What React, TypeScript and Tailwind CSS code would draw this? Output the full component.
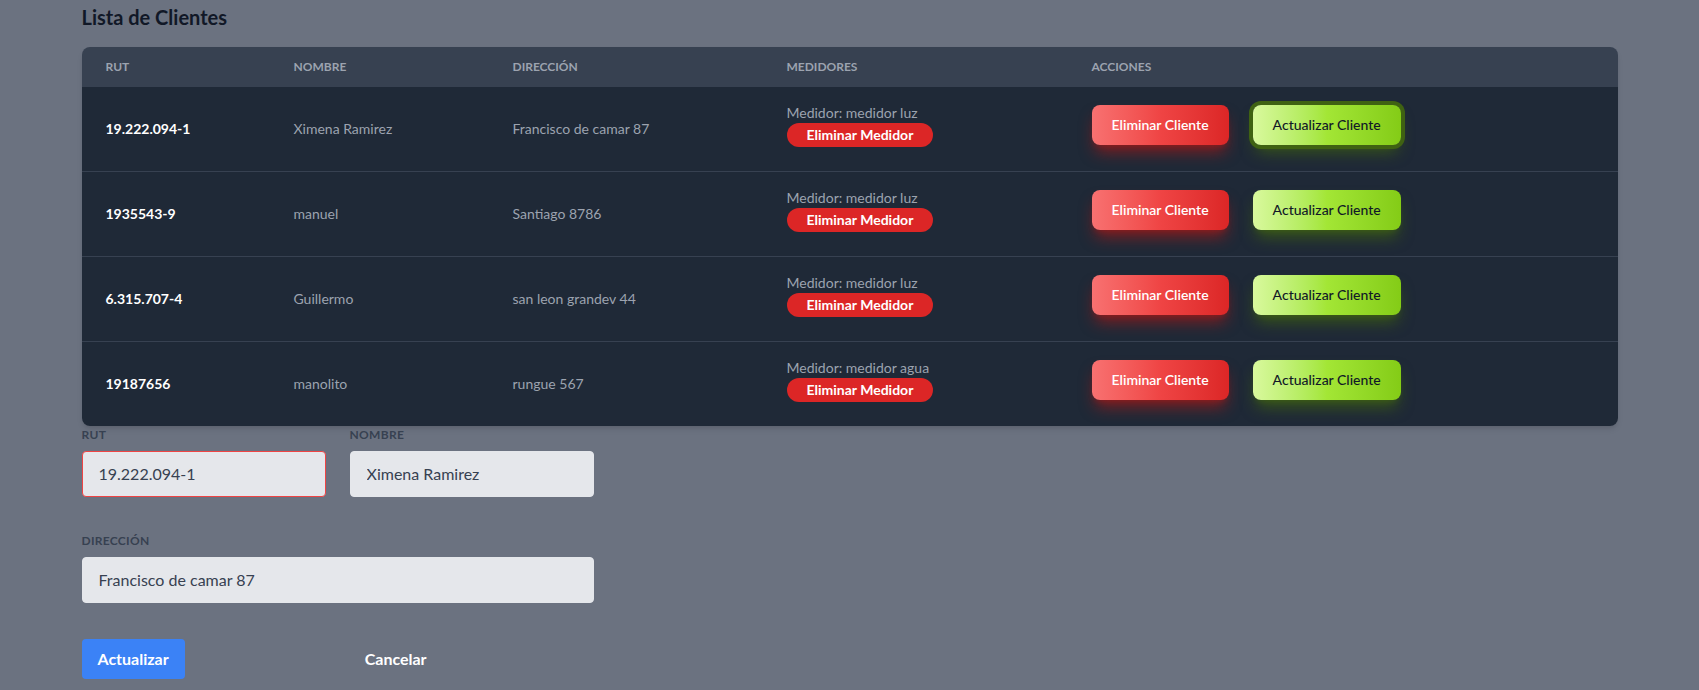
import React from 'react';

interface Cliente {
  rut: string;
  nombre: string;
  direccion: string;
  medidor: string;
}

const clientes: Cliente[] = [
  { rut: '19.222.094-1', nombre: 'Ximena Ramirez', direccion: 'Francisco de camar 87', medidor: 'medidor luz' },
  { rut: '1935543-9', nombre: 'manuel', direccion: 'Santiago 8786', medidor: 'medidor luz' },
  { rut: '6.315.707-4', nombre: 'Guillermo', direccion: 'san leon grandev 44', medidor: 'medidor luz' },
  { rut: '19187656', nombre: 'manolito', direccion: 'rungue 567', medidor: 'medidor agua' },
];

export default function App() {
  const editando = clientes[0];

  return (
    <div className="min-h-screen bg-[#6b7280] font-['Lato',_sans-serif]">
      <div className="container mx-auto pt-[3px]">
        <h2 className="text-xl font-bold text-[#111827] mb-4">Lista de Clientes</h2>

        {/* Tabla de clientes */}
        <div className="rounded-lg overflow-hidden shadow-md">
          <table className="w-full text-sm text-left text-[#9ca3af] table-fixed">
            <thead className="text-xs uppercase bg-[#374151] text-[#9ca3af]">
              <tr>
                <th className="px-6 py-3 w-[188px] font-bold">Rut</th>
                <th className="px-6 py-3 w-[219px] font-bold">Nombre</th>
                <th className="px-6 py-3 w-[274px] font-bold">Dirección</th>
                <th className="px-6 py-3 w-[305px] font-bold">Medidores</th>
                <th className="px-6 py-3 font-bold">Acciones</th>
              </tr>
            </thead>
            <tbody>
              {clientes.map((c, i) => (
                <tr
                  key={c.rut}
                  className={`bg-[#1f2937] ${i < clientes.length - 1 ? 'border-b border-[#374151]' : ''}`}
                >
                  <td className="px-6 py-4 align-middle font-bold text-white whitespace-nowrap">{c.rut}</td>
                  <td className="px-6 py-4 align-middle">{c.nombre}</td>
                  <td className="px-6 py-4 align-middle">{c.direccion}</td>
                  <td className="px-6 py-4 align-middle">
                    <div className="mb-2">
                      <p>Medidor: {c.medidor}</p>
                      <button className="rounded-full bg-[#dc2626] text-white font-bold text-sm px-5 py-0.5">
                        Eliminar Medidor
                      </button>
                    </div>
                  </td>
                  <td className="px-6 py-4 align-middle">
                    <div className="flex items-center gap-6">
                      <button className="mb-2 rounded-lg bg-linear-to-r from-[#f87171] via-[#ef4444] to-[#dc2626] text-white font-semibold text-sm px-5 py-2.5 shadow-lg shadow-[#991b1b]/80">
                        Eliminar Cliente
                      </button>
                      <button
                        className={`mb-2 rounded-lg bg-linear-to-r from-[#d9f99d] via-[#a3e635] to-[#84cc16] text-[#111827] font-medium text-sm px-5 py-2.5 shadow-lg shadow-[#3f6212]/80 ${
                          i === 0 ? 'ring-4 ring-[#3f6212]' : ''
                        }`}
                      >
                        Actualizar Cliente
                      </button>
                    </div>
                  </td>
                </tr>
              ))}
            </tbody>
          </table>
        </div>

        {/* Formulario de edición */}
        <form className="w-[512px] pt-px">
          <div className="grid grid-cols-2 gap-x-6 mb-6">
            <div>
              <label className="block uppercase tracking-wide text-[#374151] text-xs font-bold mb-2">Rut</label>
              <input
                className="appearance-none block w-full bg-[#e5e7eb] text-[#374151] border border-[#ef4444] rounded py-3 px-4 mb-3 leading-tight focus:outline-none"
                type="text"
                defaultValue={editando.rut}
              />
            </div>
            <div>
              <label className="block uppercase tracking-wide text-[#374151] text-xs font-bold mb-2">Nombre</label>
              <input
                className="appearance-none block w-full bg-[#e5e7eb] text-[#374151] border border-[#e5e7eb] rounded py-3 px-4 mb-3 leading-tight focus:outline-none"
                type="text"
                defaultValue={editando.nombre}
              />
            </div>
          </div>
          <div className="mb-9">
            <label className="block uppercase tracking-wide text-[#374151] text-xs font-bold mb-2">Dirección</label>
            <input
              className="appearance-none block w-full bg-[#e5e7eb] text-[#374151] border border-[#e5e7eb] rounded py-3 px-4 leading-tight focus:outline-none"
              type="text"
              defaultValue={editando.direccion}
            />
          </div>
          <div className="flex items-center">
            <button type="button" className="bg-[#3b82f6] text-white font-bold py-2 px-4 rounded">
              Actualizar
            </button>
            <button type="button" className="ml-[180px] text-white font-bold">
              Cancelar
            </button>
          </div>
        </form>
      </div>
    </div>
  );
}
